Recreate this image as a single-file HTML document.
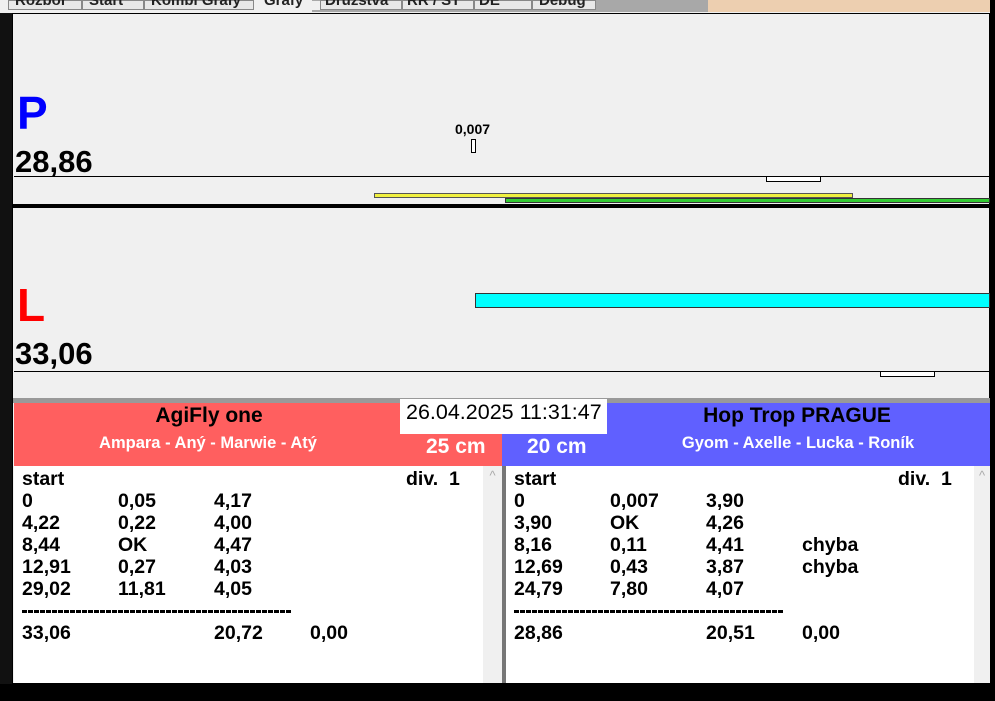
<!DOCTYPE html>
<html><head><meta charset="utf-8"><style>
*{margin:0;padding:0;box-sizing:border-box}
body{width:995px;height:701px;position:relative;background:#000;font-family:"Liberation Sans",sans-serif;overflow:hidden}
.a{position:absolute}
.b{font-weight:bold}
.row{position:absolute;font-size:19.5px;font-weight:bold;color:#000;white-space:nowrap}
</style></head><body>
<div class="a" style="left:0;top:0;width:995px;height:13px;background:#f0f0f0"></div>
<div class="a" style="left:312px;top:0;width:396px;height:12px;background:#a8a8a8"></div>
<div class="a" style="left:708px;top:0;width:287px;height:12px;background:#edcfb0"></div>
<div class="a" style="left:8px;top:0;width:590px;height:10px;font-size:15px;font-weight:bold;color:#222;line-height:0px;white-space:nowrap;overflow:hidden">
<span style="display:inline-block;width:74px;border:1px solid #888;background:#e8e8e8;height:10px;padding-left:6px">Rozbor</span><span style="display:inline-block;width:62px;border:1px solid #888;background:#e8e8e8;height:10px;padding-left:6px">Start</span><span style="display:inline-block;width:110px;border:1px solid #888;background:#e8e8e8;height:10px;padding-left:6px">Kombi Grafy</span><span style="display:inline-block;width:66px;background:#f0f0f0;height:10px;padding-left:10px">Grafy</span><span style="display:inline-block;width:82px;border:1px solid #888;background:#e8e8e8;height:10px;padding-left:4px">Družstva</span><span style="display:inline-block;width:72px;border:1px solid #888;background:#e8e8e8;height:10px;padding-left:4px">RR / ST</span><span style="display:inline-block;width:58px;border:1px solid #888;background:#e8e8e8;height:10px;padding-left:4px">DE</span><span style="display:inline-block;width:64px;border:1px solid #888;background:#e8e8e8;height:10px;padding-left:6px">Debug</span>
</div>
<div class="a" style="left:0;top:13px;width:12px;height:688px;background:#111"></div>
<div class="a" style="left:12px;top:13px;width:978px;height:671px;background:#f0f0f0;border:1px solid #000"></div>
<div class="a" style="left:990px;top:0;width:5px;height:701px;background:#000"></div>
<div class="a" style="left:0;top:684px;width:995px;height:17px;background:#000"></div>

<div class="a b" style="left:17px;top:86px;font-size:46px;color:#0000ff">P</div>
<div class="a b" style="left:15px;top:144px;font-size:31px">28,86</div>
<div class="a b" style="left:455px;top:121px;font-size:14px">0,007</div>
<div class="a" style="left:471px;top:139px;width:5px;height:14px;border:1px solid #000;background:#fff"></div>
<div class="a" style="left:14px;top:176px;width:976px;height:1px;background:#000"></div>
<div class="a" style="left:766px;top:176px;width:55px;height:6px;border:1px solid #000;background:#fff"></div>
<div class="a" style="left:374px;top:193px;width:479px;height:5px;border:1px solid #555;background:#f0f040"></div>
<div class="a" style="left:505px;top:198px;width:485px;height:5px;border:1px solid #333;background:#33cc33"></div>
<div class="a" style="left:13px;top:204px;width:977px;height:4px;background:#000"></div>

<div class="a b" style="left:17px;top:278px;font-size:46px;color:#ff0000">L</div>
<div class="a b" style="left:15px;top:336px;font-size:31px">33,06</div>
<div class="a" style="left:475px;top:293px;width:515px;height:15px;border:1px solid #333;background:#00ffff"></div>
<div class="a" style="left:14px;top:371px;width:976px;height:1px;background:#000"></div>
<div class="a" style="left:880px;top:371px;width:55px;height:6px;border:1px solid #000;background:#fff"></div>
<div class="a" style="left:13px;top:398px;width:977px;height:5px;background:#999"></div>

<div class="a" style="left:14px;top:403px;width:488px;height:63px;background:#ff5f5f"></div>
<div class="a" style="left:502px;top:403px;width:488px;height:63px;background:#6060ff"></div>
<div class="a b" style="left:14px;top:404px;width:390px;text-align:center;font-size:21px">AgiFly one</div>
<div class="a b" style="left:8px;top:434px;width:400px;text-align:center;font-size:16.5px;color:#fff">Ampara - Aný - Marwie - Atý</div>
<div class="a b" style="left:426px;top:435px;font-size:21px;color:#fff">25 cm</div>
<div class="a b" style="left:527px;top:435px;font-size:21px;color:#fff">20 cm</div>
<div class="a b" style="left:602px;top:404px;width:390px;text-align:center;font-size:21px">Hop Trop PRAGUE</div>
<div class="a b" style="left:598px;top:434px;width:400px;text-align:center;font-size:16.5px;color:#fff">Gyom - Axelle - Lucka - Roník</div>
<div class="a" style="left:400px;top:399px;width:207px;height:35px;background:#fff;font-size:21.5px;padding:1px 0 0 6px;white-space:nowrap">26.04.2025 11:31:47</div>

<div class="a" style="left:14px;top:466px;width:469px;height:217px;background:#fff"></div>
<div class="a" style="left:483px;top:466px;width:19px;height:217px;background:#f0f0f0;color:#aaa;font-size:13px;text-align:center;padding-top:2px">^</div>
<div class="a" style="left:502px;top:466px;width:4px;height:217px;background:#777"></div>
<div class="a" style="left:506px;top:466px;width:468px;height:217px;background:#fff"></div>
<div class="a" style="left:974px;top:466px;width:16px;height:217px;background:#f0f0f0;color:#aaa;font-size:13px;text-align:center;padding-top:2px">^</div>

<div class="row" style="left:22px;top:468px">start</div><div class="row" style="left:406px;top:468px">div.&nbsp; 1</div>
<div class="row" style="left:22px;top:490px">0</div><div class="row" style="left:118px;top:490px">0,05</div><div class="row" style="left:214px;top:490px">4,17</div>
<div class="row" style="left:22px;top:512px">4,22</div><div class="row" style="left:118px;top:512px">0,22</div><div class="row" style="left:214px;top:512px">4,00</div>
<div class="row" style="left:22px;top:534px">8,44</div><div class="row" style="left:118px;top:534px">OK</div><div class="row" style="left:214px;top:534px">4,47</div>
<div class="row" style="left:22px;top:556px">12,91</div><div class="row" style="left:118px;top:556px">0,27</div><div class="row" style="left:214px;top:556px">4,03</div>
<div class="row" style="left:22px;top:578px">29,02</div><div class="row" style="left:118px;top:578px">11,81</div><div class="row" style="left:214px;top:578px">4,05</div>
<div class="a" style="left:22px;top:610px;width:270px;height:3px;background:repeating-linear-gradient(90deg,#000 0 5px,#fff 5px 6px)"></div>
<div class="row" style="left:22px;top:622px">33,06</div><div class="row" style="left:214px;top:622px">20,72</div><div class="row" style="left:310px;top:622px">0,00</div>

<div class="row" style="left:514px;top:468px">start</div><div class="row" style="left:898px;top:468px">div.&nbsp; 1</div>
<div class="row" style="left:514px;top:490px">0</div><div class="row" style="left:610px;top:490px">0,007</div><div class="row" style="left:706px;top:490px">3,90</div>
<div class="row" style="left:514px;top:512px">3,90</div><div class="row" style="left:610px;top:512px">OK</div><div class="row" style="left:706px;top:512px">4,26</div>
<div class="row" style="left:514px;top:534px">8,16</div><div class="row" style="left:610px;top:534px">0,11</div><div class="row" style="left:706px;top:534px">4,41</div><div class="row" style="left:802px;top:534px">chyba</div>
<div class="row" style="left:514px;top:556px">12,69</div><div class="row" style="left:610px;top:556px">0,43</div><div class="row" style="left:706px;top:556px">3,87</div><div class="row" style="left:802px;top:556px">chyba</div>
<div class="row" style="left:514px;top:578px">24,79</div><div class="row" style="left:610px;top:578px">7,80</div><div class="row" style="left:706px;top:578px">4,07</div>
<div class="a" style="left:514px;top:610px;width:270px;height:3px;background:repeating-linear-gradient(90deg,#000 0 5px,#fff 5px 6px)"></div>
<div class="row" style="left:514px;top:622px">28,86</div><div class="row" style="left:706px;top:622px">20,51</div><div class="row" style="left:802px;top:622px">0,00</div>
</body></html>
